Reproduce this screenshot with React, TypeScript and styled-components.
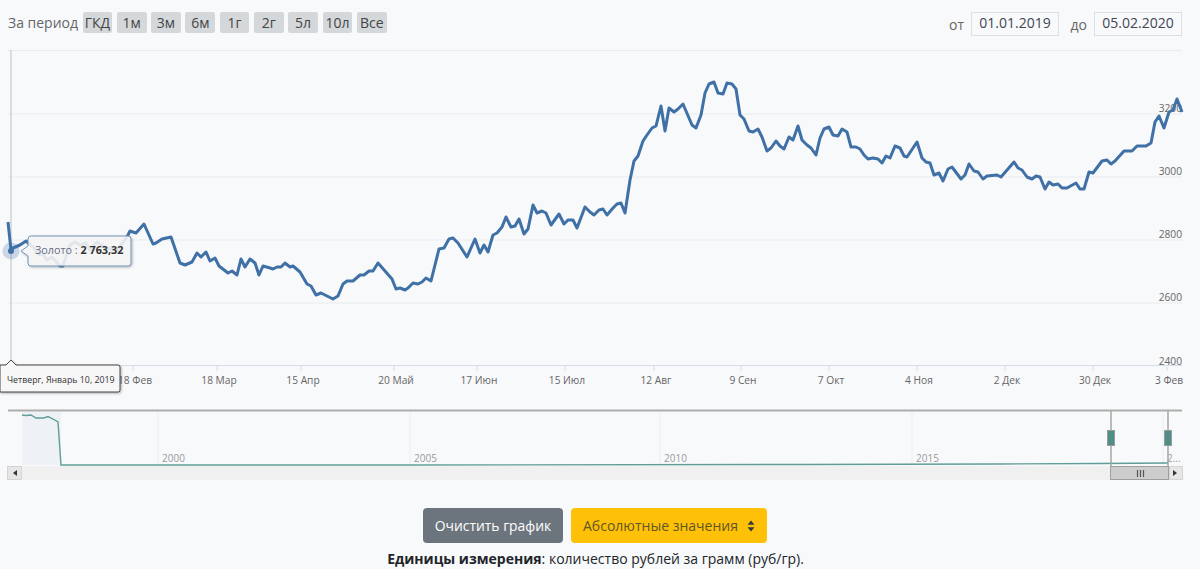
import styled, { createGlobalStyle } from "styled-components";

const periods = ["ГКД", "1м", "3м", "6м", "1г", "2г", "5л", "10л", "Все"];

// точки линии цены, координаты графика
const pricePoints =
  "8,222 11,250 13,248 20,245 26,241 33,247 39,255 42,253 47,260 52,257 60,266 63,266 70,245 75,242 80,245 86,243 90,250 97,242 103,246 110,249 117,250 124,241 128,235 130,231 136,233 144,224 153,244 156,243 162,239 171,237 180,263 185,265 192,262 197,253 201,257 206,252 210,261 215,258 219,266 228,273 232,271 237,275 241,259 245,267 250,259 255,263 259,275 263,266 270,268 273,269 277,267 281,267 285,263 290,267 293,266 300,272 307,284 311,286 316,295 321,293 333,299 338,296 343,284 347,281 353,281 360,275 364,275 369,271 373,271 378,263 392,279 396,289 400,288 405,290 408,288 413,283 418,284 422,282 426,278 431,281 439,249 444,248 449,239 453,238 458,243 467,257 475,239 480,253 484,245 488,252 493,235 497,233 502,227 506,217 511,227 515,226 519,219 524,234 528,229 533,205 537,213 542,211 546,213 551,225 559,214 564,224 568,220 573,220 577,228 585,207 590,212 594,215 599,210 603,209 607,215 613,208 617,204 621,203 625,213 630,180 634,161 638,156 643,141 647,135 652,128 656,126 661,106 665,131 669,108 674,112 678,109 683,104 692,125 696,128 701,115 705,93 709,84 714,82 718,93 723,94 727,83 732,84 736,89 740,115 744,119 749,131 753,132 758,129 762,137 767,151 771,148 776,141 780,146 784,149 789,137 793,140 798,126 802,140 807,145 811,148 816,155 820,138 824,129 829,127 833,135 838,136 842,129 847,132 851,147 856,147 860,149 864,155 868,159 873,158 878,159 882,163 886,156 890,158 895,146 900,148 904,156 907,157 917,142 922,158 926,162 930,163 934,175 939,173 943,181 948,169 952,167 961,179 965,175 969,164 974,171 978,172 983,179 987,176 997,175 1001,177 1014,162 1018,168 1022,170 1027,177 1032,179 1036,176 1040,177 1045,189 1049,182 1053,185 1058,184 1062,188 1067,188 1076,183 1080,189 1084,189 1089,172 1093,173 1102,161 1107,160 1111,164 1115,161 1124,151 1132,151 1137,146 1146,146 1151,143 1155,122 1159,116 1164,128 1169,112 1173,110 1177,99 1182,112";

const navPoints =
  "22,415 26,415.5 31,415 36,418 44,418 48,416.5 53,419 58,422 61,465 400,465 800,464.5 1000,464 1100,463.5 1168,463";

const yLabels = [
  { y: 112, text: "3200" },
  { y: 175, text: "3000" },
  { y: 238, text: "2800" },
  { y: 301, text: "2600" },
  { y: 365, text: "2400" },
];

const xLabels = [
  { x: 134, text: "18 Фев" },
  { x: 218, text: "18 Мар" },
  { x: 302, text: "15 Апр" },
  { x: 395, text: "20 Май" },
  { x: 478, text: "17 Июн" },
  { x: 566, text: "15 Июл" },
  { x: 655, text: "12 Авг" },
  { x: 742, text: "9 Сен" },
  { x: 830, text: "7 Окт" },
  { x: 918, text: "4 Ноя" },
  { x: 1006, text: "2 Дек" },
  { x: 1094, text: "30 Дек" },
  { x: 1168, text: "3 Фев" },
];

const navYears = [
  { x: 158, text: "2000" },
  { x: 410, text: "2005" },
  { x: 660, text: "2010" },
  { x: 912, text: "2015" },
  { x: 1163, text: "2..." },
];

export default function App() {
  return (
    <Page>
      <GlobalStyle />
      <Toolbar>
        <PeriodGroup>
          <PeriodLabel>За период</PeriodLabel>
          {periods.map((p) => (
            <PeriodButton key={p}>{p}</PeriodButton>
          ))}
        </PeriodGroup>
        <DateGroup>
          <DateLabel>от</DateLabel>
          <DateBox>01.01.2019</DateBox>
          <DateLabel>до</DateLabel>
          <DateBox>05.02.2020</DateBox>
        </DateGroup>
      </Toolbar>

      <Chart viewBox="0 50 1200 430">
        <defs>
          <filter id="tipShadow" x="-10%" y="-10%" width="125%" height="130%">
            <feDropShadow dx="1" dy="1" stdDeviation="1.2" floodColor="#000" floodOpacity="0.3" />
          </filter>
        </defs>

        <GridLine x1={8} x2={1182} y1={50.5} y2={50.5} />
        {[114, 177, 240, 303].map((y) => (
          <GridLine key={y} x1={8} x2={1182} y1={y} y2={y} />
        ))}
        <XAxisLine x1={8} x2={1182} y1={365.5} y2={365.5} />
        {xLabels.map((l) => (
          <XAxisLine key={l.x} x1={l.x - 1} x2={l.x - 1} y1={366} y2={371} />
        ))}
        <Crosshair x1={11} x2={11} y1={50} y2={365} />

        {yLabels.map((l) => (
          <AxisText key={l.text} x={1182} y={l.y} textAnchor="end">
            {l.text}
          </AxisText>
        ))}
        {xLabels.map((l) => (
          <AxisText key={l.text} x={l.x + 1} y={384} textAnchor="middle">
            {l.text}
          </AxisText>
        ))}

        <PriceLine points={pricePoints} />
        <circle cx={11} cy={251} r={8.5} fill="#3f70a6" fillOpacity={0.25} />
        <circle cx={11} cy={251} r={3} fill="#3f70a6" />

        <TipShape
          d="M31 236 H128 a3 3 0 0 1 3 3 V263 a3 3 0 0 1 -3 3 H31 a3 3 0 0 1 -3 -3 V256 L21 251 L28 246 V239 a3 3 0 0 1 3 -3 Z"
          filter="url(#tipShadow)"
        />
        <TipText x={35} y={254}>
          Золото : <TipValue>2 763,32</TipValue>
        </TipText>

        <DateTipShape
          d="M0 365 H6 L11 360 L16 365 H118 a2 2 0 0 1 2 2 V390 a2 2 0 0 1 -2 2 H0 Z"
          filter="url(#tipShadow)"
        />
        <DateTipText x={7} y={383}>
          Четверг, Январь 10, 2019
        </DateTipText>

        {/* навигатор */}
        <NavShade x={22} y={412} width={39} height={53} />
        {navYears.map((n) => (
          <NavGrid key={n.x} x1={n.x} x2={n.x} y1={412} y2={465} />
        ))}
        {navYears.map((n) => (
          <NavText key={n.text} x={n.x + 4} y={462}>
            {n.text}
          </NavText>
        ))}
        <NavLine points={navPoints} />
        <NavBorder x1={8} x2={1182} y1={410.5} y2={410.5} />

        <ScrollTrack x={8} y={466} width={1174} height={14} />
        <ScrollButton x={7.5} y={466.5} width={14} height={13} />
        <ScrollButton x={1169.5} y={466.5} width={13} height={13} />
        <path d="M13 473 L17 470 V476 Z" fill="#333" />
        <path d="M1177 473 L1173 470 V476 Z" fill="#333" />
        <ScrollThumb x={1110.5} y={466.5} width={58} height={13} />
        <path d="M1137.5 470 V477 M1140.5 470 V477 M1143.5 470 V477" stroke="#555" strokeWidth={1.2} />

        <NavHandleStem x1={1111} x2={1111} y1={411} y2={466} />
        <NavHandleStem x1={1168} x2={1168} y1={411} y2={466} />
        <NavHandle x={1107.5} y={430.5} width={7} height={15} />
        <NavHandle x={1164.5} y={430.5} width={7} height={15} />
      </Chart>

      <Actions>
        <ClearButton>Очистить график</ClearButton>
        <ModeSelect>
          Абсолютные значения
          <svg width="8" height="12" viewBox="0 0 8 12">
            <path d="M4 0.5 L7.5 4.8 H0.5 Z M4 11.5 L0.5 7.2 H7.5 Z" fill="#343a40" />
          </svg>
        </ModeSelect>
      </Actions>
      <Caption>
        <b>Единицы измерения</b>: количество рублей за грамм (руб/гр).
      </Caption>
    </Page>
  );
}

const GlobalStyle = createGlobalStyle`
  html, body {
    margin: 0;
    padding: 0;
    background: #f8f9fb;
    overflow: hidden;
  }
`;

const Page = styled.div`
  width: 1200px;
  height: 569px;
  overflow: hidden;
  font-family: "Open Sans", "Noto Sans", sans-serif;
  color: #212529;
`;

const Toolbar = styled.div`
  display: flex;
  justify-content: space-between;
  align-items: flex-start;
  height: 50px;
  padding: 12px 18px 0 8px;
  box-sizing: border-box;
`;

const PeriodGroup = styled.div`
  display: flex;
  align-items: center;
  gap: 4.6px;
  height: 21px;
`;

const PeriodLabel = styled.span`
  width: 70px;
  font-size: 14px;
  color: #666;
  white-space: nowrap;
`;

const PeriodButton = styled.button`
  width: 29.7px;
  height: 21px;
  padding: 0;
  border: 0;
  border-radius: 2px;
  background: #d5d8db;
  color: #444;
  font: 14px "Open Sans", sans-serif;
`;

const DateGroup = styled.div`
  display: flex;
  align-items: center;
  height: 24px;
`;

const DateLabel = styled.span`
  width: 35px;
  padding-right: 7px;
  box-sizing: border-box;
  text-align: right;
  font-size: 14px;
  color: #666;
`;

const DateBox = styled.div`
  width: 88px;
  height: 24px;
  box-sizing: border-box;
  border: 1.5px solid #dedfe0;
  font-size: 14px;
  line-height: 20px;
  text-align: center;
  color: #3f4654;
`;

const Chart = styled.svg`
  display: block;
  width: 1200px;
  height: 430px;
`;

const GridLine = styled.line`
  stroke: #e9ebee;
  stroke-width: 1;
`;

const XAxisLine = styled.line`
  stroke: #d4deea;
  stroke-width: 1;
`;

const Crosshair = styled.line`
  stroke: #c0c0c0;
  stroke-width: 1;
`;

const AxisText = styled.text`
  font-size: 10.2px;
  fill: #666;
`;

const PriceLine = styled.polyline`
  fill: none;
  stroke: #3f70a6;
  stroke-width: 3;
  stroke-linejoin: round;
`;

const TipShape = styled.path`
  fill: rgba(249, 249, 249, 0.85);
  stroke: #7393ba;
  stroke-width: 1;
`;

const TipText = styled.text`
  font-size: 10.8px;
  fill: #666c8a;
`;

const TipValue = styled.tspan`
  font-weight: 700;
  fill: #333;
`;

const DateTipShape = styled.path`
  fill: rgba(249, 249, 249, 0.95);
  stroke: #444;
  stroke-width: 1;
`;

const DateTipText = styled.text`
  font-size: 8.8px;
  fill: #333;
`;

const NavShade = styled.rect`
  fill: #eef1f5;
`;

const NavGrid = styled.line`
  stroke: #eceded;
  stroke-width: 1;
`;

const NavText = styled.text`
  font-size: 10px;
  fill: #999;
`;

const NavLine = styled.polyline`
  fill: none;
  stroke: #5f9e96;
  stroke-width: 1.4;
`;

const NavBorder = styled.line`
  stroke: #adadad;
  stroke-width: 2;
`;

const ScrollTrack = styled.rect`
  fill: #f0f0f0;
`;

const ScrollButton = styled.rect`
  fill: #e6e6e6;
  stroke: #d4d4d4;
`;

const ScrollThumb = styled.rect`
  fill: #cdcdcd;
  stroke: #9f9f9f;
`;

const NavHandleStem = styled.line`
  stroke: #a5a5a5;
  stroke-width: 1.5;
`;

const NavHandle = styled.rect`
  fill: #4d8f85;
  stroke: #9a9a9a;
`;

const Actions = styled.div`
  display: flex;
  justify-content: center;
  gap: 8px;
  margin-top: 28px;
  padding-right: 10px;
`;

const ClearButton = styled.button`
  width: 140px;
  height: 35px;
  padding: 0;
  border: 0;
  border-radius: 4px;
  background: #6c757d;
  color: #fff;
  font: 13.9px "Open Sans", sans-serif;
`;

const ModeSelect = styled.div`
  display: flex;
  align-items: center;
  justify-content: space-between;
  width: 196px;
  height: 35px;
  padding: 0 12px;
  box-sizing: border-box;
  border-radius: 4px;
  background: #ffc107;
  color: #5f5626;
  font-size: 14px;
`;

const Caption = styled.div`
  margin-top: 7px;
  text-align: center;
  font-size: 14px;
  line-height: 18px;
  padding-right: 9px;
`;
